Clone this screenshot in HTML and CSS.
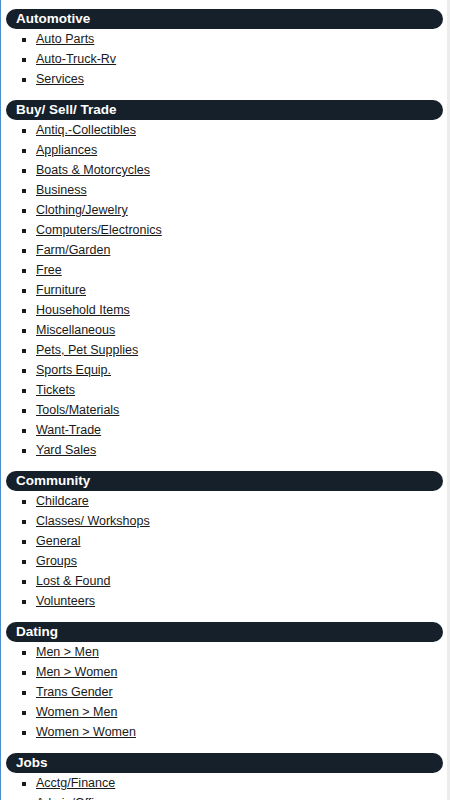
FILE: index.html
```html
<!DOCTYPE html>
<html lang="en">
<head>
  <meta charset="UTF-8" />
  <meta name="viewport" content="width=device-width, initial-scale=1.0"/>
  <title>Classifieds — Categories</title>
  <link rel="stylesheet" href="styles.css">
</head>
<body>
  <div class="page">
    <section class="cat">
      <h2 class="cat__title">Automotive</h2>
      <ul class="cat__list">
        <li><a href="#">Auto Parts</a></li>
        <li><a href="#">Auto-Truck-Rv</a></li>
        <li><a href="#">Services</a></li>
      </ul>
    </section>

    <section class="cat">
      <h2 class="cat__title">Buy/ Sell/ Trade</h2>
      <ul class="cat__list">
        <li><a href="#">Antiq.-Collectibles</a></li>
        <li><a href="#">Appliances</a></li>
        <li><a href="#">Boats &amp; Motorcycles</a></li>
        <li><a href="#">Business</a></li>
        <li><a href="#">Clothing/Jewelry</a></li>
        <li><a href="#">Computers/Electronics</a></li>
        <li><a href="#">Farm/Garden</a></li>
        <li><a href="#">Free</a></li>
        <li><a href="#">Furniture</a></li>
        <li><a href="#">Household Items</a></li>
        <li><a href="#">Miscellaneous</a></li>
        <li><a href="#">Pets, Pet Supplies</a></li>
        <li><a href="#">Sports Equip.</a></li>
        <li><a href="#">Tickets</a></li>
        <li><a href="#">Tools/Materials</a></li>
        <li><a href="#">Want-Trade</a></li>
        <li><a href="#">Yard Sales</a></li>
      </ul>
    </section>

    <section class="cat">
      <h2 class="cat__title">Community</h2>
      <ul class="cat__list">
        <li><a href="#">Childcare</a></li>
        <li><a href="#">Classes/ Workshops</a></li>
        <li><a href="#">General</a></li>
        <li><a href="#">Groups</a></li>
        <li><a href="#">Lost &amp; Found</a></li>
        <li><a href="#">Volunteers</a></li>
      </ul>
    </section>

    <section class="cat">
      <h2 class="cat__title">Dating</h2>
      <ul class="cat__list">
        <li><a href="#">Men &gt; Men</a></li>
        <li><a href="#">Men &gt; Women</a></li>
        <li><a href="#">Trans Gender</a></li>
        <li><a href="#">Women &gt; Men</a></li>
        <li><a href="#">Women &gt; Women</a></li>
      </ul>
    </section>

    <section class="cat">
      <h2 class="cat__title">Jobs</h2>
      <ul class="cat__list">
        <li><a href="#">Acctg/Finance</a></li>
        <li><a href="#">Admin/Office</a></li>
        <li><a href="#">Construction</a></li>
        <li><a href="#">General Labor</a></li>
      </ul>
    </section>
  </div>
</body>
</html>
```

FILE: styles.css
```css
html, body {
  margin: 0;
  padding: 0;
}

body {
  font-family: "Liberation Sans", Arial, sans-serif;
  background-color: #fff;
  color: #1a1a1a;
  border-left: 1px solid #4a8fcb;
}

.page {
  padding: 9px 4px 0 5px;
  border-right: 3px solid #ececec;
}

.cat {
  margin-bottom: 11px;
}

.cat__title {
  margin: 0;
  height: 20px;
  line-height: 20px;
  padding-left: 10px;
  background-color: #16202a;
  color: #fff;
  font-size: 13.5px;
  font-weight: bold;
  border-radius: 10px;
}

.cat__list {
  margin: 0;
  padding-left: 30px;
  list-style: square;
  font-size: 12.5px;
}

.cat__list li {
  line-height: 20px;
}

.cat__list a {
  color: #1a1a1a;
  text-decoration: underline;
}
```
